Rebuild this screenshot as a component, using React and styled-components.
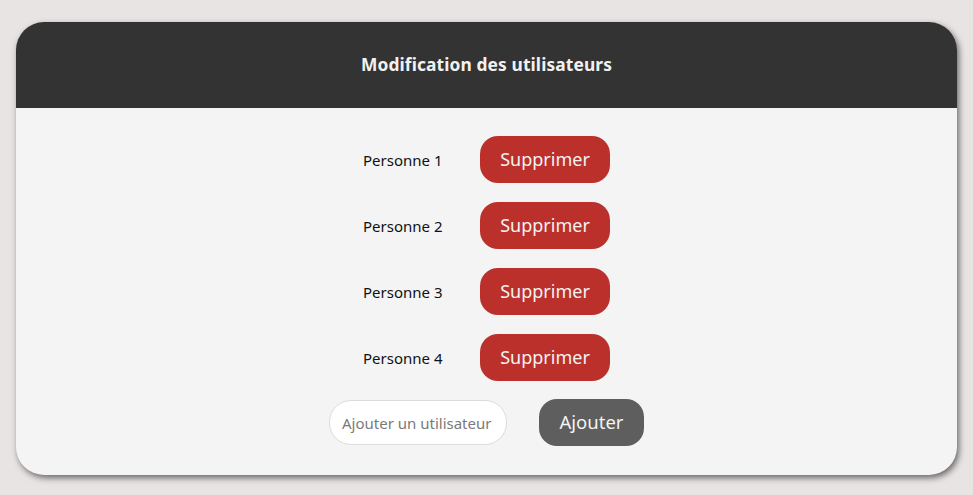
import React from "react";
import styled, { createGlobalStyle } from "styled-components";

const Global = createGlobalStyle`
  html, body { margin: 0; padding: 0; background: #e8e4e3; }
  body { font-family: "Noto Sans", "Open Sans", sans-serif; }
  * { box-sizing: border-box; }
`;

const Page = styled.div`
  padding: 22px 16px 20px 16px;
`;

const Card = styled.div`
  width: 941px;
  border-radius: 28px;
  overflow: hidden;
  background: #f4f4f4;
  box-shadow: 2px 3px 6px rgba(0, 0, 0, 0.55);
`;

const Header = styled.header`
  height: 86px;
  padding-bottom: 2px;
  background: #333333;
  display: flex;
  align-items: center;
  justify-content: center;
`;

const Title = styled.h1`
  margin: 0;
  font-size: 17.4px;
  font-weight: 700;
  color: #f1f1f1;
  letter-spacing: 0.1px;
`;

const Body = styled.div`
  padding: 28px 0 29px;
  display: flex;
  flex-direction: column;
  align-items: center;
  gap: 19px;
`;

const Row = styled.div`
  display: flex;
  align-items: center;
  gap: ${(p) => p.$gap}px;
`;

const Label = styled.span`
  width: 80px;
  font-size: 15px;
  color: #111;
  text-align: left;
`;

const Button = styled.button`
  height: 47px;
  width: ${(p) => p.$w}px;
  border: none;
  border-radius: 18px;
  background: ${(p) => p.$bg};
  color: #f3f3f3;
  font-family: inherit;
  font-size: ${(p) => p.$fs}px;
  display: flex;
  align-items: center;
  justify-content: center;
  padding: 0 0 2px;
  cursor: pointer;
`;

const Input = styled.input`
  width: 178px;
  height: 45px;
  border: 1px solid #dcdcdc;
  border-radius: 22px;
  background: #fff;
  font-family: inherit;
  font-size: 15px;
  padding: 0 12px;
  color: #333;
  &::placeholder { color: #7a7a7a; }
  outline: none;
`;

const users = ["Personne 1", "Personne 2", "Personne 3", "Personne 4"];

export default function App() {
  return (
    <>
      <Global />
      <Page>
        <Card>
          <Header>
            <Title>Modification des utilisateurs</Title>
          </Header>
          <Body>
            {users.map((u) => (
              <Row key={u} $gap={37}>
                <Label>{u}</Label>
                <Button $w={130} $fs={18} $bg="#bb302b">Supprimer</Button>
              </Row>
            ))}
            <Row $gap={32} style={{ marginTop: -1 }}>
              <Input placeholder="Ajouter un utilisateur" />
              <Button $w={105} $fs={18.5} $bg="#5e5e5e">Ajouter</Button>
            </Row>
          </Body>
        </Card>
      </Page>
    </>
  );
}
